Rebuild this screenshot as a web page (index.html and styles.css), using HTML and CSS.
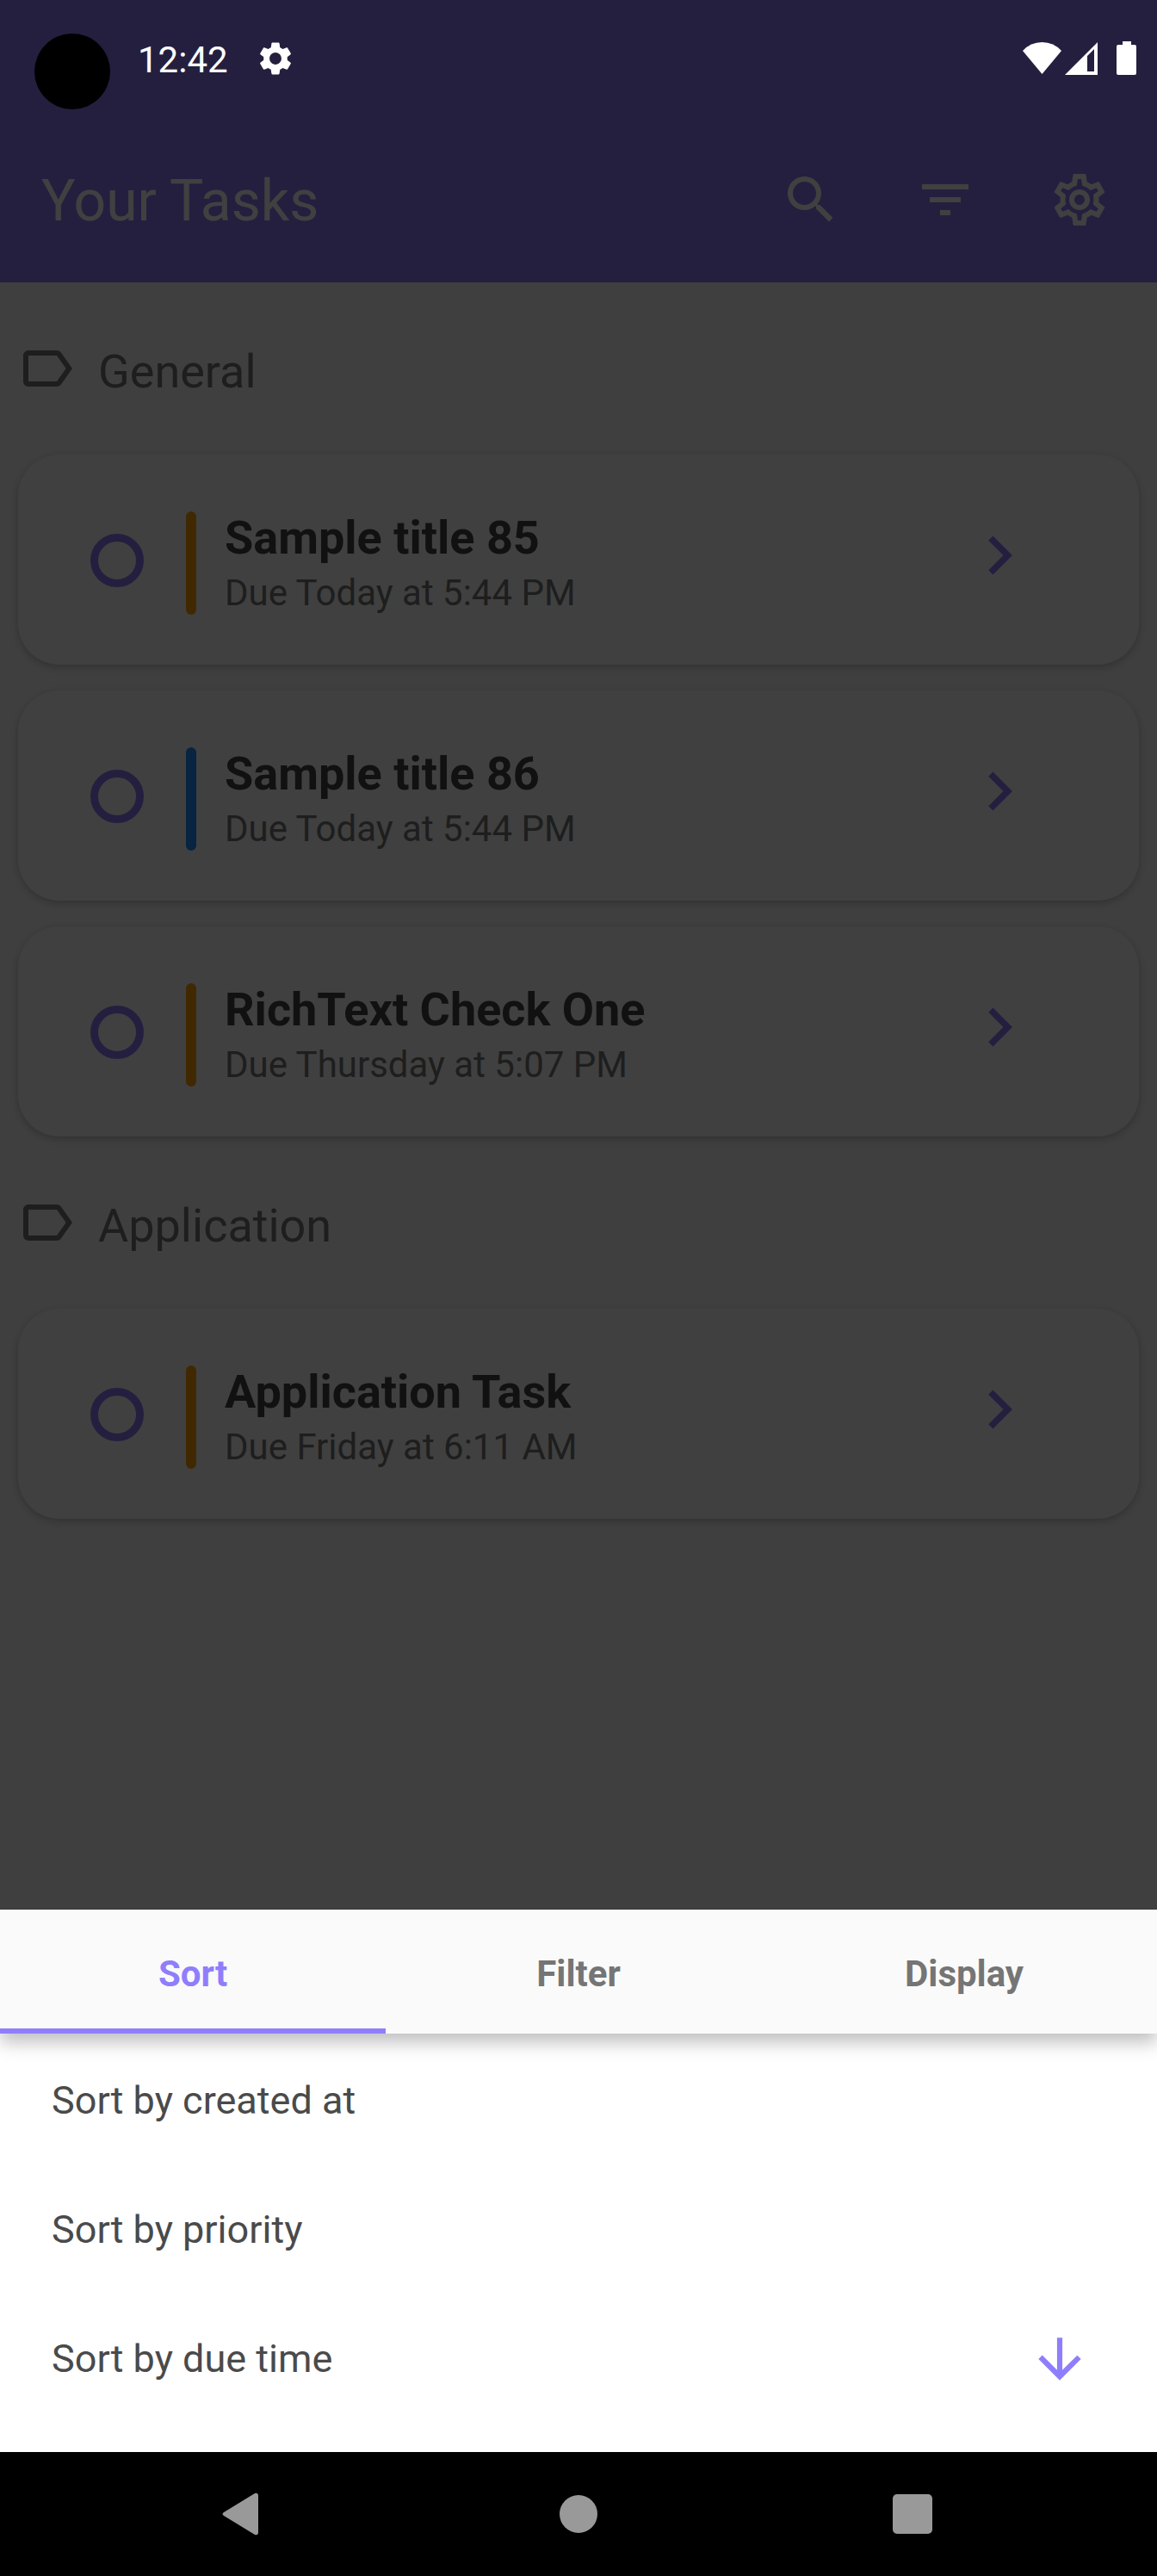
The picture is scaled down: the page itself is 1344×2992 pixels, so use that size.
FILE: index.html
```html
<!DOCTYPE html>
<html lang="en">
<head>
<meta charset="utf-8">
<meta name="viewport" content="width=device-width, initial-scale=1">
<title>Your Tasks</title>
<link rel="stylesheet" href="styles.css">
</head>
<body>
<svg class="sprite" aria-hidden="true">
  <symbol id="i-label" viewBox="0 0 24 24"><path d="M17.63 5.84C17.27 5.33 16.67 5 16 5L5 5.01C3.9 5.01 3 5.9 3 7v10c0 1.1.9 1.99 2 1.99L16 19c.67 0 1.27-.33 1.63-.84L22 12l-4.37-6.16zM16 17H5V7h11l3.55 5L16 17z"/></symbol>
  <symbol id="i-chevron" viewBox="0 0 24 24"><path d="M10 6L8.59 7.41 13.17 12l-4.58 4.59L10 18l6-6z"/></symbol>
</svg>

<div class="app">
  <div class="status-bar">
    <span class="camera"></span>
    <span class="clock">12:42</span>
    <svg class="status-gear" viewBox="0 0 24 24" aria-hidden="true"><path d="M19.14 12.94c.04-.3.06-.61.06-.94 0-.32-.02-.64-.07-.94l2.03-1.58c.18-.14.23-.41.12-.61l-1.92-3.32c-.12-.22-.37-.29-.59-.22l-2.39.96c-.5-.38-1.03-.7-1.62-.94l-.36-2.54c-.04-.24-.24-.41-.48-.41h-3.84c-.24 0-.43.17-.47.41l-.36 2.54c-.59.24-1.13.57-1.62.94l-2.39-.96c-.22-.08-.47 0-.59.22L2.74 8.87c-.12.21-.08.47.12.61l2.03 1.58c-.05.3-.09.63-.09.94s.02.64.07.94l-2.03 1.58c-.18.14-.23.41-.12.61l1.92 3.32c.12.22.37.29.59.22l2.39-.96c.5.38 1.03.7 1.62.94l.36 2.54c.05.24.24.41.48.41h3.84c.24 0 .44-.17.47-.41l.36-2.54c.59-.24 1.13-.56 1.62-.94l2.39.96c.22.08.47 0 .59-.22l1.92-3.32c.12-.22.07-.47-.12-.61l-2.01-1.58zM12 15.6c-1.98 0-3.6-1.62-3.6-3.6s1.62-3.6 3.6-3.6 3.6 1.62 3.6 3.6-1.62 3.6-3.6 3.6z"/></svg>
    <svg class="status-signals" viewBox="0 0 132 40" aria-hidden="true">
      <path d="M0 11Q9 1 22.500 1Q36 1 45 11L22.500 38z"/>
      <path fill-rule="evenodd" d="M49 39L87 1V39zM75 17V35H83V9z"/>
      <path d="M116 0h10v4h4q2 0 2 2v31q0 2-2 2h-19q-2 0-2-2V6q0-2 2-2h5z"/>
    </svg>
  </div>

  <header class="toolbar">
    <h1 class="toolbar-title">Your Tasks</h1>
    <button class="icon-button" type="button" aria-label="Search"><svg class="icon" viewBox="0 0 24 24"><path d="M15.500 14h-.79l-.28-.27C15.410 12.590 16 11.110 16 9.500 16 5.910 13.090 3 9.500 3S3 5.910 3 9.500 5.910 16 9.500 16c1.610 0 3.090-.59 4.230-1.570l.27.28v.79l5 4.990L20.490 19l-4.990-5zm-6 0C7.010 14 5 11.990 5 9.500S7.010 5 9.500 5 14 7.010 14 9.500 11.990 14 9.500 14z"/></svg></button>
    <button class="icon-button" type="button" aria-label="Filter"><svg class="icon" viewBox="0 0 24 24"><path d="M10 18h4v-2h-4v2zM3 6v2h18V6H3zm3 7h12v-2H6v2z"/></svg></button>
    <button class="icon-button" type="button" aria-label="Settings"><svg class="icon" viewBox="0 0 24 24"><path d="M19.430 12.980c.04-.32.07-.64.07-.98 0-.34-.03-.66-.07-.98l2.110-1.650c.19-.15.24-.42.12-.64l-2-3.460c-.09-.16-.26-.25-.44-.25-.06 0-.12.010-.17.030l-2.490 1c-.52-.4-1.080-.73-1.690-.98l-.38-2.650C14.460 2.180 14.250 2 14 2h-4c-.25 0-.46.18-.49.42l-.38 2.650c-.61.25-1.170.59-1.690.98l-2.490-1c-.06-.02-.12-.03-.18-.03-.17 0-.34.09-.43.25l-2 3.460c-.13.22-.07.49.12.64l2.110 1.650c-.04.32-.07.65-.07.98 0 .33.03.66.07.98l-2.110 1.650c-.19.15-.24.42-.12.64l2 3.460c.09.16.26.25.44.25.06 0 .12-.01.17-.03l2.490-1c.52.4 1.080.73 1.690.98l.38 2.650c.03.24.24.42.49.42h4c.25 0 .46-.18.49-.42l.38-2.650c.61-.25 1.170-.59 1.690-.98l2.490 1c.06.02.12.03.18.03.17 0 .34-.09.43-.25l2-3.460c.12-.22.07-.49-.12-.64l-2.110-1.650zm-1.980-1.710c.04.31.05.52.05.73 0 .21-.02.43-.05.73l-.14 1.130.89.7 1.080.84-.7 1.210-1.270-.51-1.040-.42-.9.680c-.43.32-.84.56-1.250.73l-1.060.43-.16 1.130-.2 1.350h-1.400l-.19-1.350-.16-1.130-1.060-.43c-.43-.18-.83-.41-1.230-.71l-.91-.7-1.060.43-1.270.51-.7-1.210 1.080-.84.89-.7-.14-1.130c-.03-.31-.05-.54-.05-.74s.02-.43.05-.73l.14-1.130-.89-.7-1.080-.84.7-1.210 1.270.51 1.040.42.9-.68c.43-.32.84-.56 1.250-.73l1.060-.43.16-1.130.2-1.350h1.390l.19 1.350.16 1.130 1.060.43c.43.18.83.41 1.230.71l.91.7 1.060-.43 1.270-.51.7 1.210-1.070.85-.89.7.14 1.130zM12 8c-2.210 0-4 1.790-4 4s1.790 4 4 4 4-1.790 4-4-1.790-4-4-4zm0 6c-1.100 0-2-.9-2-2s.9-2 2-2 2 .9 2 2-.9 2-2 2z"/></svg></button>
  </header>

  <main class="tasks">
    <section>
      <h2 class="group-title"><svg class="icon" aria-hidden="true"><use href="#i-label"/></svg>General</h2>
      <ul class="cards">
        <li class="card">
          <span class="card-check"><input class="check" type="checkbox" aria-label="Complete Sample title 85"></span>
          <span class="priority priority-high"></span>
          <div class="card-text"><h3 class="card-title">Sample title 85</h3><p class="card-due">Due Today at 5:44 PM</p></div>
          <button class="card-open" type="button" aria-label="Open Sample title 85"><svg class="chevron"><use href="#i-chevron"/></svg></button>
        </li>
        <li class="card">
          <span class="card-check"><input class="check" type="checkbox" aria-label="Complete Sample title 86"></span>
          <span class="priority priority-low"></span>
          <div class="card-text"><h3 class="card-title">Sample title 86</h3><p class="card-due">Due Today at 5:44 PM</p></div>
          <button class="card-open" type="button" aria-label="Open Sample title 86"><svg class="chevron"><use href="#i-chevron"/></svg></button>
        </li>
        <li class="card">
          <span class="card-check"><input class="check" type="checkbox" aria-label="Complete RichText Check One"></span>
          <span class="priority priority-high"></span>
          <div class="card-text"><h3 class="card-title">RichText Check One</h3><p class="card-due">Due Thursday at 5:07 PM</p></div>
          <button class="card-open" type="button" aria-label="Open RichText Check One"><svg class="chevron"><use href="#i-chevron"/></svg></button>
        </li>
      </ul>
    </section>
    <section>
      <h2 class="group-title"><svg class="icon" aria-hidden="true"><use href="#i-label"/></svg>Application</h2>
      <ul class="cards">
        <li class="card">
          <span class="card-check"><input class="check" type="checkbox" aria-label="Complete Application Task"></span>
          <span class="priority priority-high"></span>
          <div class="card-text"><h3 class="card-title">Application Task</h3><p class="card-due">Due Friday at 6:11 AM</p></div>
          <button class="card-open" type="button" aria-label="Open Application Task"><svg class="chevron"><use href="#i-chevron"/></svg></button>
        </li>
      </ul>
    </section>
  </main>
  <div class="scrim"></div>
</div>

<div class="sheet" role="dialog" aria-label="List options">
  <div class="tabs" role="tablist">
    <button class="tab tab-active" type="button" role="tab" aria-selected="true">Sort</button>
    <button class="tab" type="button" role="tab" aria-selected="false">Filter</button>
    <button class="tab" type="button" role="tab" aria-selected="false">Display</button>
  </div>
  <div class="options">
    <button class="option" type="button">Sort by created at</button>
    <button class="option" type="button">Sort by priority</button>
    <button class="option" type="button">Sort by due time<svg class="arrow" viewBox="0 0 24 24" aria-hidden="true"><path d="M20 12l-1.410-1.410L13 16.170V4h-2v12.170l-5.580-5.590L4 12l8 8 8-8z"/></svg></button>
  </div>
</div>

<nav class="system-nav" aria-label="System">
  <button class="nav-button" type="button" aria-label="Back"><svg class="nav-icon" viewBox="0 0 72 72"><path d="M52 15v42q0 4-4 3L12 38q-3-2 0-4L48 12q4-1 4 3z"/></svg></button>
  <button class="nav-button" type="button" aria-label="Home"><svg class="nav-icon" viewBox="0 0 72 72"><circle cx="36" cy="36" r="22"/></svg></button>
  <button class="nav-button" type="button" aria-label="Recent apps"><svg class="nav-icon" viewBox="0 0 72 72"><rect x="13" y="13" width="46" height="46" rx="5"/></svg></button>
</nav>
</body>
</html>
```
FILE: styles.css
```css
:root {
  --accent: #8f7efc;
}

* {
  box-sizing: border-box;
}

body {
  margin: 0;
  min-height: 100vh;
  display: flex;
  flex-direction: column;
  background: #fff;
  font-family: Roboto, "Liberation Sans", sans-serif;
}

h1, h2, h3, p, ul {
  margin: 0;
  padding: 0;
  font-weight: 400;
}

ul {
  list-style: none;
}

button {
  margin: 0;
  padding: 0;
  border: 0;
  background: none;
  font: inherit;
  color: inherit;
}

svg {
  display: block;
  flex: none;
  fill: currentColor;
}

.sprite {
  display: none;
}

.icon {
  width: 72px;
  height: 72px;
}

.app {
  position: relative;
  flex: 1;
  background: #fafafa;
}

.scrim {
  position: absolute;
  inset: 0;
  background: rgba(0, 0, 0, 0.75);
}

/* The system bar stays lit above the scrim; its colour is the dimmed accent. */
.status-bar {
  position: relative;
  z-index: 1;
  display: flex;
  align-items: flex-start;
  height: 136px;
  padding: 39px 24px 0 40px;
  background: #241f3f;
  color: #fff;
}

.camera {
  width: 88px;
  height: 88px;
  border-radius: 50%;
  background: #000;
}

.clock {
  margin-left: 32px;
  font-size: 42px;
  line-height: 62px;
}

.status-gear {
  width: 46px;
  height: 46px;
  margin: 6px 0 0 32px;
}

.status-signals {
  width: 132px;
  height: 40px;
  margin: 9px 0 0 auto;
}

.toolbar {
  display: flex;
  align-items: center;
  gap: 12px;
  height: 192px;
  padding: 0 18px 0 48px;
  background: var(--accent);
  color: #fff;
}

.toolbar-title {
  flex: 1;
  padding-top: 3px;
  font-size: 66px;
  line-height: 78px;
}

.icon-button,
.nav-button {
  display: grid;
  place-items: center;
  width: 144px;
  height: 144px;
}

.group-title {
  display: flex;
  gap: 24px;
  padding: 64px 18px 56px;
  font-size: 54px;
  line-height: 80px;
  color: #787878;
}

.cards {
  display: flex;
  flex-direction: column;
  gap: 30px;
  padding: 0 21px;
}

.card {
  display: flex;
  align-items: flex-start;
  padding: 66px 117px 58px 84px;
  border-radius: 48px;
  background: #fff;
  box-shadow: 0 3px 10px rgba(0, 0, 0, 0.22);
}

.card-check {
  display: flex;
  align-items: center;
  height: 114px;
}

.check {
  appearance: none;
  width: 62px;
  height: 62px;
  margin: 0;
  border: 9px solid var(--accent);
  border-radius: 50%;
}

.priority {
  width: 12px;
  height: 120px;
  margin: 0 33px 0 49px;
  border-radius: 6px;
}

.priority-high {
  background: #ffa500;
}

.priority-low {
  background: #1e90ff;
}

.card-text {
  flex: 1;
  display: flex;
  flex-direction: column;
  gap: 8px;
}

.card-title {
  font-size: 54px;
  font-weight: 700;
  line-height: 62px;
  color: #444;
}

.card-due {
  font-size: 42px;
  line-height: 50px;
  color: #787878;
}

.card-open {
  display: flex;
  align-items: center;
  height: 102px;
  color: var(--accent);
}

.chevron {
  width: 90px;
  height: 90px;
}

.sheet {
  overflow: hidden;
  background: #fff;
}

.tabs {
  display: grid;
  grid-template-columns: repeat(3, 1fr);
  background: #fafafa;
  box-shadow: 0 10px 20px rgba(0, 0, 0, 0.26);
}

.tab {
  height: 144px;
  padding-top: 12px;
  border-bottom: 6px solid transparent;
  font-size: 42px;
  font-weight: 700;
  line-height: 50px;
  color: #757575;
}

.tab-active {
  border-bottom-color: var(--accent);
  color: var(--accent);
}

.options {
  display: flex;
  flex-direction: column;
  padding: 3px 0 33px;
}

.option {
  display: flex;
  align-items: center;
  justify-content: space-between;
  height: 150px;
  padding: 0 76px 0 60px;
  font-size: 45px;
  line-height: 54px;
  text-align: left;
  color: #4a4a4a;
}

.arrow {
  width: 74px;
  height: 74px;
  color: var(--accent);
}

.system-nav {
  display: flex;
  justify-content: space-between;
  padding: 0 212px;
  background: #000;
  color: #999;
}

.nav-icon {
  width: 72px;
  height: 72px;
}
```
